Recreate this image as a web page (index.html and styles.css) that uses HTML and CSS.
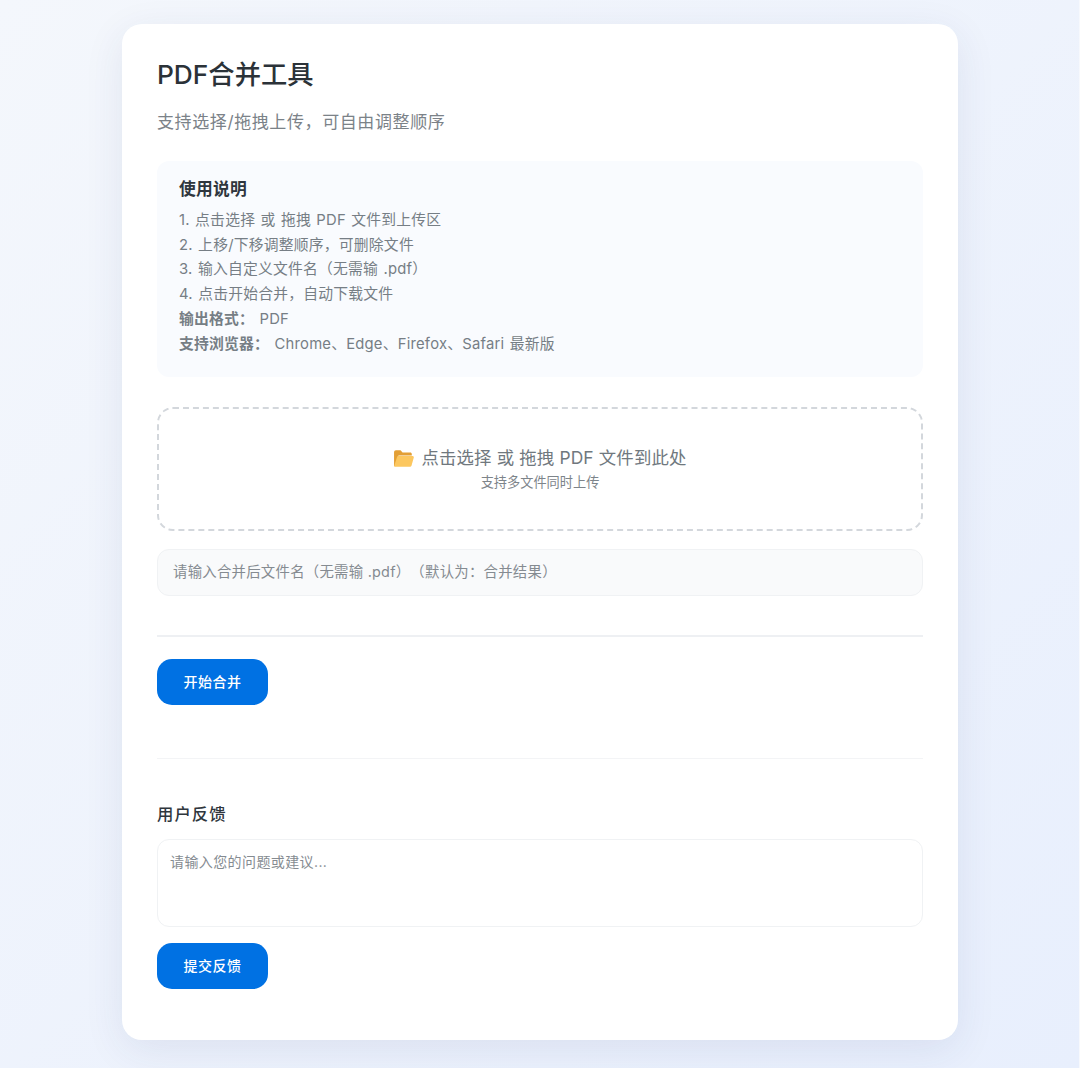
FILE: index.html
```html
<!DOCTYPE html>
<html lang="zh-CN">
<head>
    <meta charset="UTF-8">
    <meta name="viewport" content="width=device-width, initial-scale=1.0">
    <title>PDF合并工具</title>
    <link rel="stylesheet" href="styles.css">
</head>
<body>
    <div class="container">
        <h1>PDF合并工具</h1>
        <p class="subtitle">支持选择/拖拽上传，可自由调整顺序</p>

        <div class="guide">
            <h3>使用说明</h3>
            <p>1. 点击选择 或 拖拽 PDF 文件到上传区</p>
            <p>2. 上移/下移调整顺序，可删除文件</p>
            <p>3. 输入自定义文件名（无需输 .pdf）</p>
            <p>4. 点击开始合并，自动下载文件</p>
            <p><strong>输出格式：</strong> PDF</p>
            <p><strong>支持浏览器：</strong> Chrome、Edge、Firefox、Safari 最新版</p>
        </div>

        <div class="upload-area">
            <div class="upload-title">
                <svg class="folder-icon" viewBox="0 0 20 18" aria-hidden="true">
                    <path d="M1 3C1 2 1.8 1.2 2.8 1.2h4.4l1.9 2.2h7.4c.8 0 1.4.6 1.4 1.4v1.4H5.2L2.2 16.4H1z" fill="#e39f35"/>
                    <path d="M4.9 6.6h13.8c.8 0 1.3.7 1.1 1.4l-2.2 7.8c-.2.6-.7 1-1.3 1H1.9c-.5 0-.8-.4-.7-.9l2.7-8.5c.1-.5.5-.8 1-.8z" fill="#fcc75f"/>
                </svg>
                点击选择 或 拖拽 PDF 文件到此处
            </div>
            <div class="upload-hint">支持多文件同时上传</div>
        </div>

        <input class="filename-input" type="text" placeholder="请输入合并后文件名（无需输 .pdf）（默认为：合并结果）">

        <div class="action-row">
            <button class="btn">开始合并</button>
        </div>

        <div class="feedback">
            <h3>用户反馈</h3>
            <textarea class="feedback-input" placeholder="请输入您的问题或建议..."></textarea>
            <button class="btn">提交反馈</button>
        </div>
    </div>
</body>
</html>
```

FILE: styles.css
```css
* {
    box-sizing: border-box;
}
body {
    margin: 0;
    padding: 24px 0 28px;
    min-height: 1068px;
    font-family: Inter, "Noto Sans CJK SC", sans-serif;
    color: #2f363d;
    background: linear-gradient(135deg, #f4f7fc 0%, #e8effd 100%);
    box-shadow: inset -1px 0 0 #f7f9fd;
}
.container {
    width: 836px;
    height: 1016px;
    margin: 0 auto;
    padding: 34px 35px;
    background-color: #fff;
    border-radius: 20px;
    box-shadow: 0 10px 40px rgba(40, 50, 110, 0.09);
}
h1 {
    margin: 0;
    font-size: 26.3px;
    line-height: 34px;
    font-weight: 500;
    color: #2b3238;
}
.subtitle {
    margin: 17px 0 0;
    font-size: 17px;
    line-height: 26px;
    letter-spacing: 0.6px;
    color: #7b8288;
}
.guide {
    height: 216px;
    margin-top: 26px;
    padding: 16px 22px;
    background-color: #f9fbfe;
    border-radius: 12px;
    font-size: 14.8px;
    line-height: 24.7px;
    letter-spacing: 0.22px;
    word-spacing: 1px;
    color: #767e85;
}
.guide h3 {
    margin: 0 0 7px;
    font-size: 16.8px;
    line-height: 24px;
    font-weight: 700;
    color: #2f363d;
}
.guide p {
    margin: 0;
}
.guide strong {
    font-weight: 700;
}
.upload-area {
    display: flex;
    flex-direction: column;
    align-items: center;
    justify-content: center;
    height: 124px;
    margin-top: 30px;
    border: 2px dashed #d3d7dc;
    border-radius: 16px;
}
.upload-title {
    display: flex;
    align-items: center;
    gap: 7px;
    font-size: 17.4px;
    line-height: 26px;
    letter-spacing: 0.15px;
    color: #70787e;
}
.folder-icon {
    width: 21px;
    height: 19px;
}
.upload-hint {
    margin-top: 0;
    font-size: 13.2px;
    line-height: 22px;
    color: #7d848a;
}
.filename-input {
    display: block;
    width: 100%;
    height: 47px;
    margin-top: 18px;
    padding: 0 15px 2px;
    background-color: #f9fafb;
    border: 1px solid #f0f2f4;
    border-radius: 12px;
    font-family: inherit;
    font-size: 14.4px;
    letter-spacing: 0.25px;
    text-spacing-trim: space-all;
}
.filename-input::placeholder,
.feedback-input::placeholder {
    color: #858b91;
    opacity: 1;
}
.action-row {
    margin-top: 39px;
    padding-top: 22px;
    border-top: 2px solid #eef0f3;
}
.btn {
    display: block;
    width: 111px;
    height: 46px;
    padding: 0 0 3px;
    background-color: #0071e3;
    color: #fff;
    border: none;
    border-radius: 15px;
    font-family: inherit;
    font-size: 14px;
    font-weight: 500;
    letter-spacing: 0.5px;
    cursor: pointer;
}
.feedback {
    margin-top: 53px;
    padding-top: 43px;
    border-top: 1px solid #f3f4f6;
}
.feedback h3 {
    margin: 0;
    font-size: 16.4px;
    line-height: 24px;
    font-weight: 500;
    letter-spacing: 1px;
    color: #2f363d;
}
.feedback-input {
    display: block;
    width: 100%;
    height: 88px;
    margin: 13px 0 16px;
    padding: 12px 12px;
    background-color: #fff;
    border: 1px solid #f0f2f4;
    border-radius: 12px;
    font-family: inherit;
    font-size: 14px;
    line-height: 20px;
    letter-spacing: 0.4px;
    resize: none;
    outline: none;
}
```
